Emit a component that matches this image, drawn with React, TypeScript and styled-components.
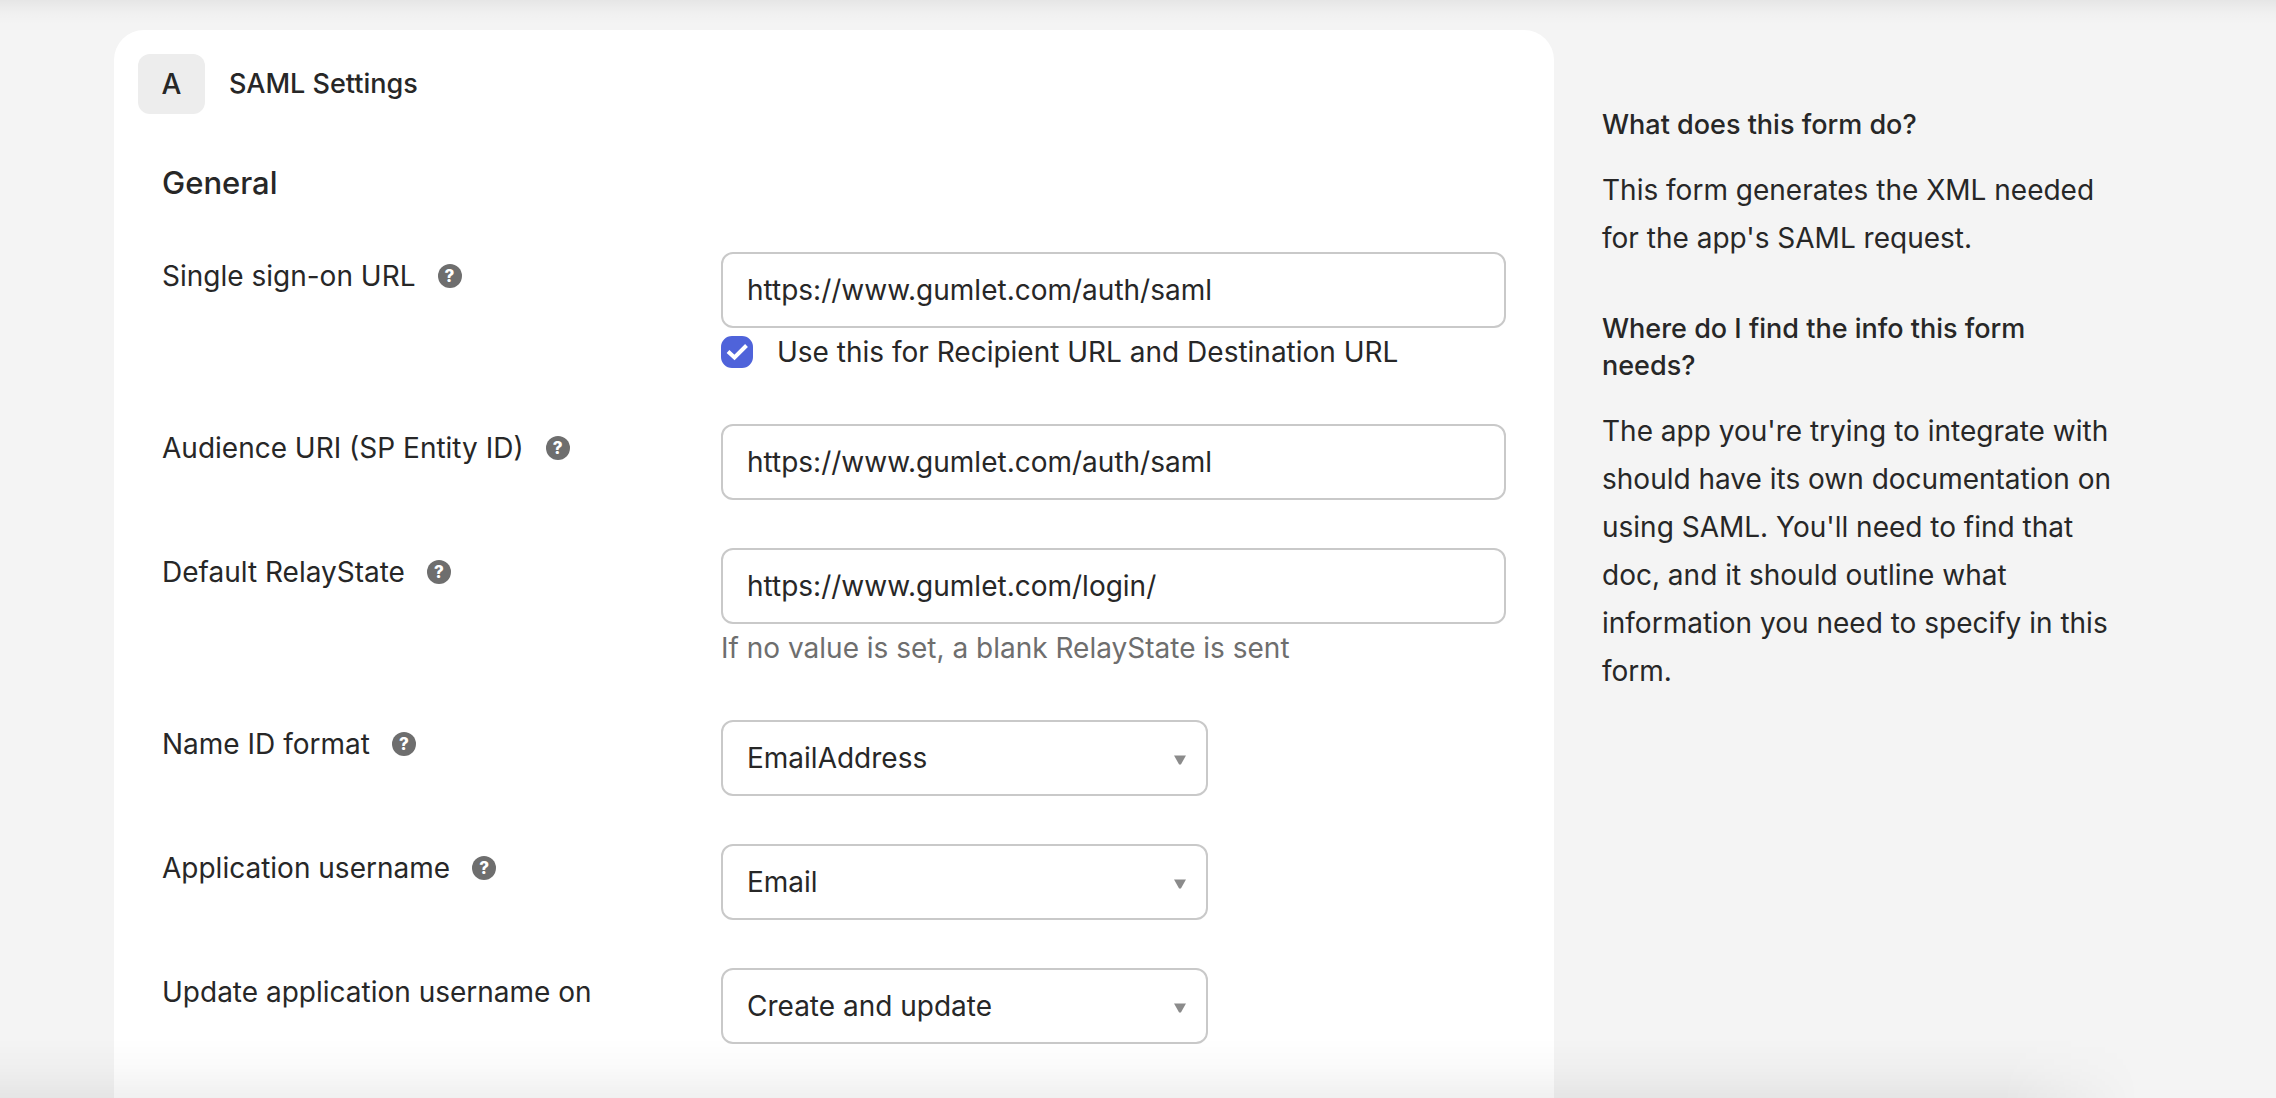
import React, { useId } from "react";
import styled, { createGlobalStyle } from "styled-components";

const GlobalStyle = createGlobalStyle`
  *, *::before, *::after { box-sizing: border-box; }
  body {
    margin: 0;
    background: #f4f4f4;
    color: #272727;
    font-family: Inter, "Liberation Sans", sans-serif;
    font-size: 28px;
    line-height: 48px;
    -webkit-font-smoothing: antialiased;
  }
`;

const Page = styled.div`
  position: relative;
  display: grid;
  grid-template-columns: minmax(0, 1440fr) minmax(0, 560fr);
  gap: 48px;
  height: 100vh;
  padding: 30px 114px 0;
  overflow: hidden;
`;

const EdgeShade = styled.div<{ $edge: "top" | "bottom" }>`
  position: absolute;
  left: 0;
  right: 0;
  ${(p) => p.$edge}: 0;
  height: ${(p) => (p.$edge === "top" ? 24 : 60)}px;
  pointer-events: none;
  background: linear-gradient(
    to ${(p) => p.$edge},
    rgba(0, 0, 0, 0),
    rgba(0, 0, 0, 0.02) 50%,
    rgba(0, 0, 0, 0.06)
  );
  ${(p) => p.$edge === "bottom" && "mask-image: linear-gradient(to right, #000 88%, transparent 94%);"}
`;

const Card = styled.main`
  padding: 24px 48px 0;
  background: #fff;
  border-radius: 30px 30px 0 0;
`;

const CardHeader = styled.header`
  display: flex;
  align-items: center;
  gap: 24px;
  margin-left: -24px;
`;

const StepBadge = styled.span`
  display: grid;
  place-items: center;
  width: 67px;
  height: 60px;
  border-radius: 12px;
  background: #ededed;
  font-weight: 500;
`;

const CardTitle = styled.h1`
  margin: 0;
  font-size: 27px;
  font-weight: 500;
`;

const SectionTitle = styled.h2`
  margin: 45px 0;
  font-size: 31px;
  line-height: 48px;
  font-weight: 500;
`;

const Form = styled.form`
  display: grid;
  gap: 48px;
`;

const Row = styled.div`
  display: grid;
  grid-template-columns: 559fr 785fr;
`;

const LabelCell = styled.div`
  display: flex;
  align-items: center;
  align-self: start;
  gap: 22px;
`;

const HelpButton = styled.button`
  display: grid;
  place-items: center;
  width: 24px;
  height: 24px;
  padding: 0;
  border: 0;
  border-radius: 50%;
  background: #6e6e6e;
  color: #fff;
  font: 800 17px/24px Inter, sans-serif;
`;

const TextInput = styled.input`
  display: block;
  width: 100%;
  height: 76px;
  padding: 0 24px;
  border: 2px solid #c9c9c9;
  border-radius: 12px;
  background: #fff;
  color: inherit;
  font: inherit;
`;

const SelectBox = styled.div`
  position: relative;
  width: 62%;
`;

const Select = styled.select`
  display: block;
  width: 100%;
  height: 76px;
  padding: 0 48px 0 24px;
  border: 2px solid #c9c9c9;
  border-radius: 12px;
  background: #fff;
  color: inherit;
  font: inherit;
  appearance: none;
`;

const Caret = styled.svg`
  position: absolute;
  top: 35px;
  right: 22px;
  pointer-events: none;
`;

const CheckLine = styled.div`
  display: flex;
  align-items: center;
  gap: 24px;
`;

const CheckMark = styled.span`
  position: relative;
  display: block;
  width: 32px;
  height: 32px;

  svg {
    position: absolute;
    inset: 0;
    pointer-events: none;
  }
`;

const Checkbox = styled.input`
  display: block;
  width: 32px;
  height: 32px;
  margin: 0;
  border: 2px solid #4f63da;
  border-radius: 11px;
  background: #fff;
  appearance: none;

  &:checked { background: #4f63da; }
`;

const Hint = styled.p`
  margin: 0;
  color: #6e6e6e;
`;

const Help = styled.aside`
  max-width: 520px;
  padding-top: 76px;
`;

const HelpTitle = styled.h3`
  margin: 0 0 23px;
  font-size: 27px;
  line-height: 37px;
  font-weight: 500;
`;

const HelpText = styled.p`
  margin: 0 0 48px;
`;

interface FieldProps {
  label: string;
  help?: boolean;
  children: (id: string) => React.ReactNode;
}

function Field({ label, help = true, children }: FieldProps) {
  const id = useId();
  return (
    <Row>
      <LabelCell>
        <label htmlFor={id}>{label}</label>
        {help && (
          <HelpButton type="button" aria-label={`Help: ${label}`}>
            ?
          </HelpButton>
        )}
      </LabelCell>
      <div>{children(id)}</div>
    </Row>
  );
}

function Dropdown({ id, options }: { id: string; options: string[] }) {
  return (
    <SelectBox>
      <Select id={id} defaultValue={options[0]}>
        {options.map((o) => (
          <option key={o}>{o}</option>
        ))}
      </Select>
      <Caret width="12" height="10" viewBox="0 0 12 10" aria-hidden="true">
        <path d="M0 0.5H12L6.9 9.5H5.1Z" fill="#8b8b8b" />
      </Caret>
    </SelectBox>
  );
}

export default function App() {
  return (
    <>
      <GlobalStyle />
      <Page>
        <Card>
          <CardHeader>
            <StepBadge>A</StepBadge>
            <CardTitle>SAML Settings</CardTitle>
          </CardHeader>
          <SectionTitle>General</SectionTitle>
          <Form>
            <Field label="Single sign-on URL">
              {(id) => (
                <>
                  <TextInput id={id} type="text" defaultValue="https://www.gumlet.com/auth/saml" />
                  <CheckLine>
                    <CheckMark>
                      <Checkbox id="recipient" type="checkbox" defaultChecked />
                      <svg width="32" height="32" viewBox="0 0 32 32" aria-hidden="true">
                        <path d="M7 15.5L13.5 21.5L25.5 9.5" fill="none" stroke="#fff" strokeWidth="4" />
                      </svg>
                    </CheckMark>
                    <label htmlFor="recipient">Use this for Recipient URL and Destination URL</label>
                  </CheckLine>
                </>
              )}
            </Field>
            <Field label="Audience URI (SP Entity ID)">
              {(id) => <TextInput id={id} type="text" defaultValue="https://www.gumlet.com/auth/saml" />}
            </Field>
            <Field label="Default RelayState">
              {(id) => (
                <>
                  <TextInput id={id} type="text" defaultValue="https://www.gumlet.com/login/" />
                  <Hint>If no value is set, a blank RelayState is sent</Hint>
                </>
              )}
            </Field>
            <Field label="Name ID format">
              {(id) => <Dropdown id={id} options={["EmailAddress"]} />}
            </Field>
            <Field label="Application username">
              {(id) => <Dropdown id={id} options={["Email"]} />}
            </Field>
            <Field label="Update application username on" help={false}>
              {(id) => <Dropdown id={id} options={["Create and update"]} />}
            </Field>
          </Form>
        </Card>
        <Help>
          <HelpTitle>What does this form do?</HelpTitle>
          <HelpText>This form generates the XML needed for the app's SAML request.</HelpText>
          <HelpTitle>Where do I find the info this form needs?</HelpTitle>
          <HelpText>
            The app you're trying to integrate with should have its own documentation on using SAML.
            You'll need to find that doc, and it should outline what information you need to specify
            in this form.
          </HelpText>
        </Help>
        <EdgeShade $edge="top" />
        <EdgeShade $edge="bottom" />
      </Page>
    </>
  );
}
